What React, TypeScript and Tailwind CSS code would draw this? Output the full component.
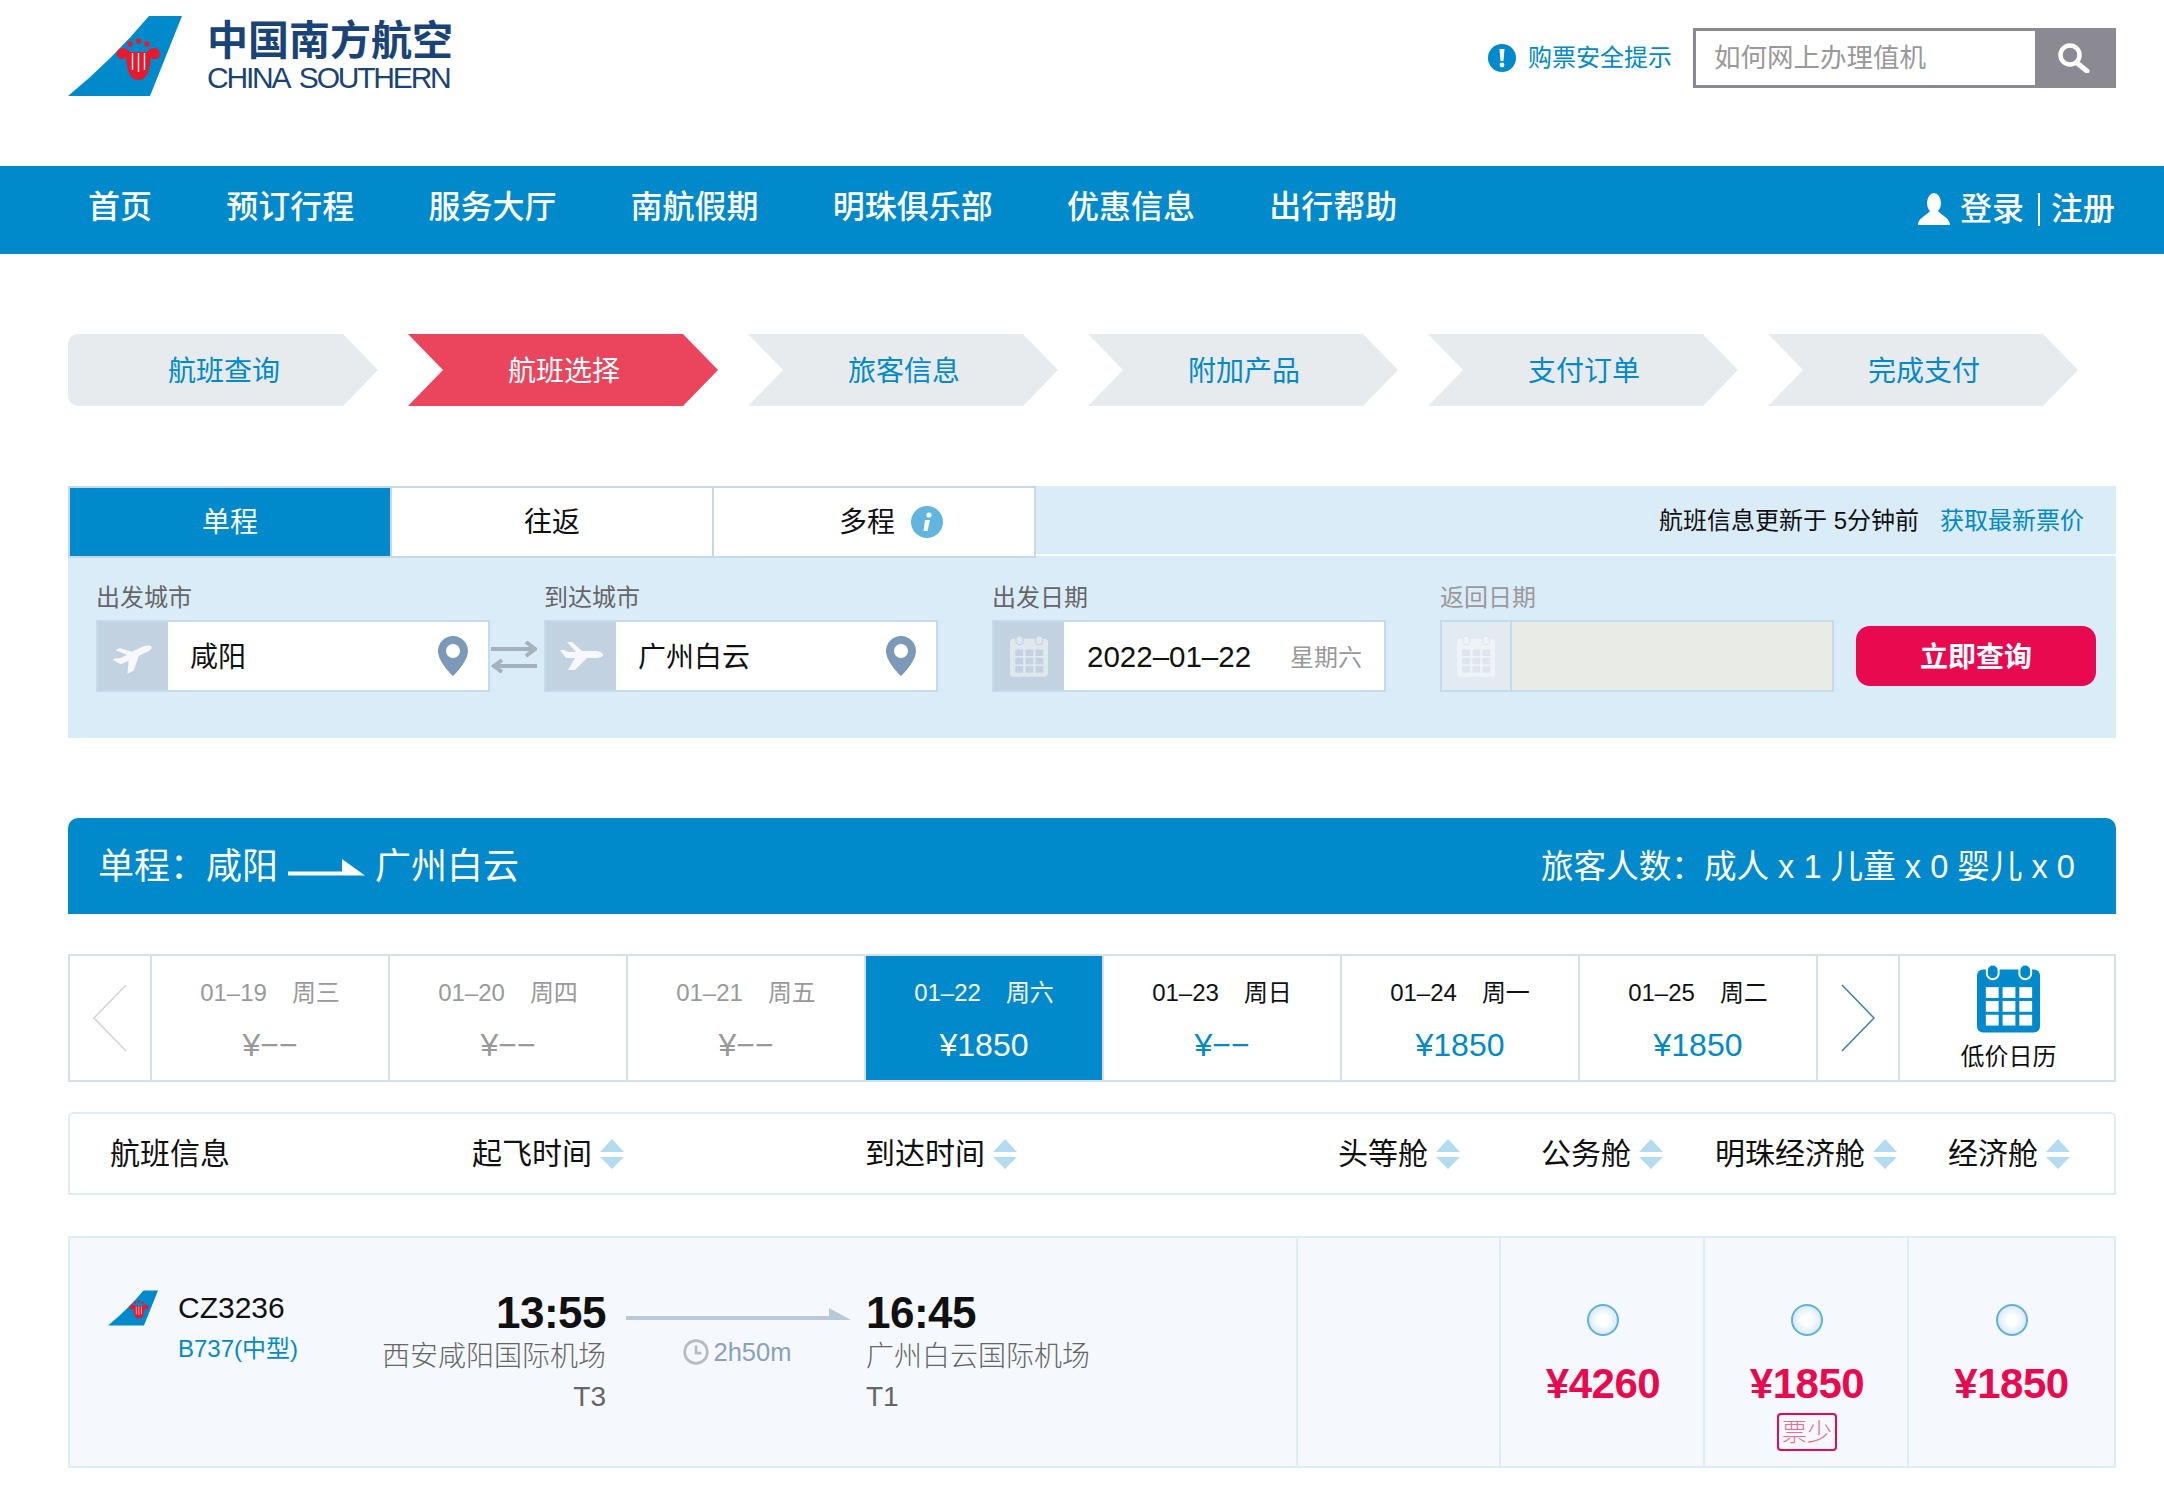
const navItems = ["首页", "预订行程", "服务大厅", "南航假期", "明珠俱乐部", "优惠信息", "出行帮助"]
const steps = ["航班查询", "航班选择", "旅客信息", "附加产品", "支付订单", "完成支付"]

const dates = [
  { day: "01–19", week: "周三", price: "¥−−", tone: "past" },
  { day: "01–20", week: "周四", price: "¥−−", tone: "past" },
  { day: "01–21", week: "周五", price: "¥−−", tone: "past" },
  { day: "01–22", week: "周六", price: "¥1850", tone: "active" },
  { day: "01–23", week: "周日", price: "¥−−", tone: "future" },
  { day: "01–24", week: "周一", price: "¥1850", tone: "future" },
  { day: "01–25", week: "周二", price: "¥1850", tone: "future" },
]

const columns = [
  { label: "航班信息", width: "w-[362px]", sort: false },
  { label: "起飞时间", width: "w-[393px]", sort: true },
  { label: "到达时间", width: "w-[473px]", sort: true },
  { label: "头等舱", width: "w-[203px]", sort: true },
  { label: "公务舱", width: "w-[174px]", sort: true },
  { label: "明珠经济舱", width: "w-[233px]", sort: true },
  { label: "经济舱", width: "w-[150px]", sort: true },
]

function Tail({ className }: { className: string }) {
  return (
    <svg viewBox="0 0 114 80" className={className}>
      <path d="M81 0H114L82 80H0Q44 44 81 0Z" fill="#0089cb" />
      <path
        d="M49 38C49 31 58 30 62 36H79C83 30 92 31 92 38C92 43 86 45 83 41C82 52 80 64 70.5 64C61 64 59 52 58 41C55 45 49 43 49 38Z"
        fill="#e8192c"
      />
      <path d="M64.5 37V54M70.5 37V56M76.5 37V54" stroke="#fff" strokeWidth="1.4" />
      <circle cx="62" cy="28" r="2.8" fill="#e8192c" />
      <circle cx="70.5" cy="25" r="2.8" fill="#e8192c" />
      <circle cx="79" cy="28" r="2.8" fill="#e8192c" />
    </svg>
  )
}

function SortArrows() {
  return (
    <svg viewBox="0 0 24 30" className="w-[24px] h-[30px] ml-[8px] shrink-0">
      <path d="M12 0L24 13H0Z" fill="#b4dcf0" />
      <path d="M0 18H24L12 30Z" fill="#b4dcf0" />
    </svg>
  )
}

function Pin() {
  return (
    <svg viewBox="0 0 30 40" className="w-[30px] h-[40px] shrink-0">
      <path
        fillRule="evenodd"
        d="M15 0C6.7 0 0 6.7 0 15C0 26 15 40 15 40C15 40 30 26 30 15C30 6.7 23.3 0 15 0ZM15 8A7 7 0 1 1 15 22A7 7 0 1 1 15 8Z"
        fill="#7d99b8"
      />
    </svg>
  )
}

function PlaneIcon({ className }: { className: string }) {
  return (
    <svg viewBox="0 0 44 28" className={className}>
      <path d="M44 13C44 15 40 16 36 16H28L16 28H9L16 16H7L1 8H5L9 10H17L8 0H13L23 9H36C40 9 44 11 44 13Z" fill="#fff" fillOpacity="0.85" />
    </svg>
  )
}

function CalendarIcon({ body, cell, className }: { body: string; cell: string; className: string }) {
  const xs = [9, 26, 43]
  const ys = [24, 38, 52]
  return (
    <svg viewBox="0 0 64 70" className={className}>
      <rect x="0" y="6" width="64" height="64" rx="6" fill={body} />
      <rect x="10" y="1" width="12" height="15" rx="6" fill={body} stroke={cell} strokeWidth="2" />
      <rect x="43" y="1" width="12" height="15" rx="6" fill={body} stroke={cell} strokeWidth="2" />
      {ys.map((y) => xs.map((x) => <rect key={`${x}-${y}`} x={x} y={y} width="13" height="11" fill={cell} />))}
    </svg>
  )
}

function Field({ label, muted, icon, children }: { label: string; muted?: boolean; icon: React.ReactNode; children?: React.ReactNode }) {
  return (
    <div className="w-[394px]">
      <div className={`h-[62px] flex items-end pb-[10px] text-[24px] leading-none ${muted ? "text-[#999]" : "text-[#666]"}`}>{label}</div>
      <div className="h-[72px] flex border-2 border-[#c5dcec]">
        <div className={`w-[70px] flex items-center justify-center ${muted ? "bg-[#e2ebf2] border-r-2 border-[#c5dcec]" : "bg-[#c3d2e0]"}`}>{icon}</div>
        <div className={`flex-1 flex items-center justify-between ${muted ? "bg-[#e9ebe6]" : "bg-white"}`}>{children}</div>
      </div>
    </div>
  )
}

function PriceCell({ price, low, last }: { price: string; low?: boolean; last?: boolean }) {
  return (
    <div className={`flex flex-col items-center pt-[66px] ${last ? "w-[205px]" : "w-[204px] pl-[2px] border-r-2 border-[#dcecf9]"}`}>
      <div className="w-[32px] h-[32px] rounded-full border-2 border-[#5fb1dc] bg-[radial-gradient(circle,#ffffff_25%,#d6e9f7_75%)]" />
      <div className="mt-[24px] text-[42px] leading-[48px] font-bold tracking-[-0.5px] text-[#e8094f]">{price}</div>
      {low && (
        <div className="mt-[5px] w-[60px] h-[38px] flex items-center justify-center border-2 border-[#e8094f] rounded-[4px] text-[25px] leading-none font-light text-[#ee6a8a]">
          票少
        </div>
      )}
    </div>
  )
}

export default function App() {
  return (
    <div className="w-[2164px] h-[1488px] bg-white overflow-hidden [font-family:'Liberation_Sans','Noto_Sans_CJK_SC',sans-serif]">
      {/* Header */}
      <header className="h-[166px] flex justify-between pl-[68px] pr-[48px]">
        <div className="flex pt-[16px]">
          <Tail className="w-[114px] h-[80px]" />
          <div className="ml-[25px] mt-[2px] w-[250px] text-[#1a4478]">
            <div className="text-[41px] leading-[46px] font-bold whitespace-nowrap">中国南方航空</div>
            <div className="text-[30px] leading-[28px] tracking-[-2.2px] [word-spacing:5px] whitespace-nowrap">CHINA SOUTHERN</div>
          </div>
        </div>
        <div className="flex items-center h-[60px] mt-[28px]">
          <svg viewBox="0 0 28 28" className="w-[28px] h-[28px]">
            <circle cx="14" cy="14" r="14" fill="#0089cb" />
            <path d="M11.5 5H16.5L15.5 17H12.5Z" fill="#fff" />
            <circle cx="14" cy="21" r="2.4" fill="#fff" />
          </svg>
          <span className="ml-[12px] text-[24px] text-[#0089cb]">购票安全提示</span>
          <div className="ml-[21px] w-[423px] h-[60px] flex border-[3px] border-[#8b8a92]">
            <div className="flex-1 pl-[18px] pt-[2px] flex items-center text-[26.5px] text-[#999] bg-white">如何网上办理值机</div>
            <div className="w-[78px] bg-[#8b8a92] flex items-center justify-center">
              <svg viewBox="0 0 32 30" className="w-[32px] h-[30px]" fill="none" stroke="#fff">
                <circle cx="12" cy="12" r="9.5" strokeWidth="4.5" />
                <path d="M19 20L29 28" strokeWidth="5" strokeLinecap="round" />
              </svg>
            </div>
          </div>
        </div>
      </header>

      {/* Main nav */}
      <nav className="h-[88px] bg-[#0089cb] flex items-center justify-between pl-[88px] pr-[49px] text-white text-[32px] font-medium">
        <div className="flex gap-[74.2px] pb-[6px]">
          {navItems.map((item) => (
            <span key={item}>{item}</span>
          ))}
        </div>
        <div className="flex items-center pb-[2px]">
          <svg viewBox="0 0 32 32" className="w-[32px] h-[32px] mr-[10px]">
            <ellipse cx="16" cy="10" rx="7" ry="10" fill="#fff" />
            <path d="M0 32C0 25 8 23 12 18H20C24 23 32 25 32 32Z" fill="#fff" />
          </svg>
          <span>登录</span>
          <span className="w-[2px] h-[33px] bg-white ml-[14px] mr-[11px]" />
          <span>注册</span>
        </div>
      </nav>

      {/* Booking steps */}
      <div className="mt-[80px] ml-[68px] flex gap-[30px]">
        {steps.map((step, i) => (
          <div
            key={step}
            className={`w-[310px] h-[72px] pt-[3px] pl-[2px] flex items-center justify-center text-[28px] ${
              i === 0
                ? "rounded-l-[10px] [clip-path:polygon(0_0,275px_0,310px_36px,275px_72px,0_72px)]"
                : "[clip-path:polygon(0_0,275px_0,310px_36px,275px_72px,0_72px,35px_36px)]"
            } ${i === 1 ? "bg-[#ea455c] text-white" : "bg-[#e8ebee] text-[#0089cb]"}`}
          >
            {step}
          </div>
        ))}
      </div>

      {/* Search panel */}
      <section className="mt-[80px] ml-[68px] w-[2048px] h-[252px] bg-[#dbecf9]">
        <div className="flex h-[72px]">
          <div className="w-[968px] flex border-2 border-[#c5d9e9] text-[28px] text-[#111]">
            <div className="w-[320px] pt-[2px] bg-[#0089cb] text-white flex items-center justify-center">单程</div>
            <div className="w-[322px] pt-[2px] bg-white border-l-2 border-[#c5d9e9] flex items-center justify-center">往返</div>
            <div className="flex-1 pt-[2px] pr-[14px] bg-white border-l-2 border-[#c5d9e9] flex items-center justify-center">
              <span className="relative">
                多程
                <svg viewBox="0 0 32 32" className="absolute left-full top-[4px] ml-[16px] w-[32px] h-[32px]">
                  <circle cx="16" cy="16" r="16" fill="#62b5de" />
                  <circle cx="18" cy="9" r="2.6" fill="#fff" />
                  <path d="M14 14H19L16.5 25H12.5Z" fill="#fff" />
                </svg>
              </span>
            </div>
          </div>
          <div className="flex-1 h-[70px] pt-[2px] border-b-2 border-white flex items-center justify-end pr-[32px] text-[24px]">
            <span className="text-[#111]">航班信息更新于 5分钟前</span>
            <span className="ml-[21px] text-[#0089cb]">获取最新票价</span>
          </div>
        </div>
        <div className="flex pl-[28px]">
          <Field label="出发城市" icon={<PlaneIcon className="w-[42px] h-[27px] -rotate-[25deg]" />}>
            <span className="ml-[22px] pt-[3px] text-[28px] text-[#111]">咸阳</span>
            <span className="mr-[20px] flex"><Pin /></span>
          </Field>
          <div className="w-[54px] h-[134px] flex items-end justify-center pb-[19px] pr-[6px]">
            <svg viewBox="0 0 46 32" className="w-[46px] h-[32px] shrink-0" fill="none" stroke="#a5b2bc" strokeWidth="4">
              <path d="M0 8H44M35 1L44 8L35 15" />
              <path d="M46 25H3M11 19L3 25L11 31" />
            </svg>
          </div>
          <Field label="到达城市" icon={<PlaneIcon className="w-[44px] h-[28px]" />}>
            <span className="ml-[22px] pt-[3px] text-[28px] text-[#111]">广州白云</span>
            <span className="mr-[20px] flex"><Pin /></span>
          </Field>
          <div className="w-[54px]" />
          <Field label="出发日期" icon={<CalendarIcon body="#dfe7ef" cell="#c3d2e0" className="w-[38px] h-[42px]" />}>
            <span className="ml-[23px] pt-[2px] text-[29.5px] text-[#111]">2022–01–22</span>
            <span className="mr-[22px] pt-[3px] text-[24px] text-[#999]">星期六</span>
          </Field>
          <div className="w-[54px]" />
          <Field muted label="返回日期" icon={<CalendarIcon body="#eef3f7" cell="#dde6ee" className="w-[38px] h-[42px]" />} />
          <button className="ml-[22px] mt-[68px] w-[240px] h-[60px] pt-[3px] rounded-[14px] bg-[#e8094f] text-white text-[28px] font-bold">立即查询</button>
        </div>
      </section>

      {/* Route banner */}
      <section className="mt-[80px] ml-[68px] w-[2048px] h-[96px] pt-[2px] rounded-t-[10px] bg-[#0089cb] text-white flex items-center justify-between pl-[30px] pr-[41px]">
        <div className="flex items-center text-[36px]">
          <span className="w-[108px]">{"单程\uFF1A"}</span>
          <span>咸阳</span>
          <svg viewBox="0 0 77 17" className="w-[77px] h-[17px] mx-[10px]">
            <path d="M0 12.5H54V0L77 16.5H0Z" fill="#fff" />
          </svg>
          <span>广州白云</span>
        </div>
        <div className="text-[32.6px]">{"旅客人数\uFF1A成人 x 1 儿童 x 0 婴儿 x 0"}</div>
      </section>

      {/* Date strip */}
      <section className="mt-[40px] ml-[68px] w-[2048px] h-[128px] flex border-2 border-[#d5e0ea]">
        <div className="w-[82px] flex items-center justify-center border-r-2 border-[#d5e0ea]">
          <svg viewBox="0 0 34 68" className="w-[34px] h-[68px]" fill="none" stroke="#cfd3d6" strokeWidth="1.5">
            <path d="M33 1L1 34L33 67" />
          </svg>
        </div>
        {dates.map((d) => (
          <div
            key={d.day}
            className={`w-[238px] flex flex-col items-center border-r-2 border-[#d5e0ea] ${
              d.tone === "active" ? "bg-[#0089cb] text-white" : ""
            } ${d.tone === "past" ? "text-[#999]" : ""} ${d.tone === "future" ? "text-[#111]" : ""}`}
          >
            <div className="mt-[23px] flex gap-[25px] text-[24px] leading-[28px]">
              <span>{d.day}</span>
              <span>{d.week}</span>
            </div>
            <div className={`mt-[20px] text-[32px] leading-[36px] ${d.tone === "future" ? "text-[#0089cb]" : ""}`}>{d.price}</div>
          </div>
        ))}
        <div className="w-[82px] flex items-center justify-center border-r-2 border-[#d5e0ea]">
          <svg viewBox="0 0 34 68" className="w-[34px] h-[68px]" fill="none" stroke="#3a7cb4" strokeWidth="1.5">
            <path d="M1 1L33 34L1 67" />
          </svg>
        </div>
        <div className="flex-1 flex flex-col items-center pt-[7px] pl-[3px]">
          <CalendarIcon body="#0089cb" cell="#ffffff" className="w-[63px] h-[70px]" />
          <span className="mt-[10px] text-[24px] leading-[28px] text-[#111]">低价日历</span>
        </div>
      </section>

      {/* Table head */}
      <section className="mt-[30px] ml-[68px] w-[2048px] h-[83px] flex items-center pl-[40px] border-2 border-[#dfedf8] rounded-t-[6px] text-[30px] text-[#111]">
        {columns.map((col) => (
          <div key={col.label} className={`flex items-center shrink-0 ${col.width}`}>
            <span className="whitespace-nowrap">{col.label}</span>
            {col.sort && <SortArrows />}
          </div>
        ))}
      </section>

      {/* Flight row */}
      <section className="mt-[41px] ml-[68px] w-[2048px] h-[232px] flex bg-[#f5f9fd] border-2 border-[#dcecf9]">
        <div className="w-[313px] flex pl-[38px] pt-[50px]">
          <Tail className="w-[50px] h-[40px]" />
          <div className="ml-[20px]">
            <div className="text-[30px] leading-[40px] text-[#111]">CZ3236</div>
            <div className="mt-[3px] text-[24px] leading-[36px] text-[#0089cb] whitespace-nowrap">B737(中型)</div>
          </div>
        </div>
        <div className="w-[223px] flex flex-col items-end pt-[49px] text-[#666] font-light">
          <div className="text-[44px] leading-[52px] font-bold text-[#111] tracking-[-0.5px]">13:55</div>
          <div className="mt-[-6px] text-[28px] leading-[48px] whitespace-nowrap">西安咸阳国际机场</div>
          <div className="mt-[-8px] text-[28px] leading-[48px]">T3</div>
        </div>
        <div className="w-[260px] flex flex-col items-center pt-[70px] pl-[4px]">
          <svg viewBox="0 0 225 12" className="w-[225px] h-[12px] shrink-0">
            <path d="M0 8H203V0L225 12H0Z" fill="#b9c9d9" />
          </svg>
          <div className="mt-[16px] mr-[2px] flex items-center gap-[5px] text-[25.5px] leading-[32px] text-[#8aa0bd]">
            <svg viewBox="0 0 24 24" className="w-[26px] h-[26px]" fill="none" stroke="#b5bbc0" strokeWidth="2.4">
              <circle cx="12" cy="12" r="10.5" />
              <path d="M12 6V13H17" />
            </svg>
            2h50m
          </div>
        </div>
        <div className="w-[432px] flex flex-col items-start pt-[49px] border-r-2 border-[#dcecf9] text-[#666] font-light">
          <div className="text-[44px] leading-[52px] font-bold text-[#111] tracking-[-0.5px]">16:45</div>
          <div className="mt-[-6px] text-[28px] leading-[48px] whitespace-nowrap">广州白云国际机场</div>
          <div className="mt-[-8px] text-[28px] leading-[48px]">T1</div>
        </div>
        <div className="w-[203px] border-r-2 border-[#dcecf9]" />
        <PriceCell price="¥4260" />
        <PriceCell price="¥1850" low />
        <PriceCell price="¥1850" last />
      </section>
    </div>
  )
}
